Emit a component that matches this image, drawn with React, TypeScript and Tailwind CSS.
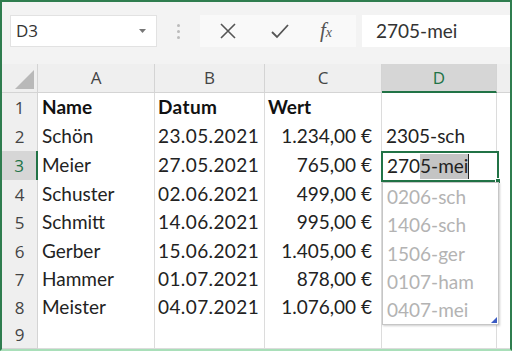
import React from 'react';

type Row = {
    n: number;
    h: string;
    a: string;
    b: string;
    c: string;
    d: string;
};

const rows: Row[] = [
    { n: 1, h: 'h-[29px]', a: 'Name', b: 'Datum', c: 'Wert', d: '' },
    { n: 2, h: 'h-[29px]', a: 'Schön', b: '23.05.2021', c: '1.234,00 €', d: '2305-sch' },
    { n: 3, h: 'h-[29px]', a: 'Meier', b: '27.05.2021', c: '765,00 €', d: '' },
    { n: 4, h: 'h-[28px]', a: 'Schuster', b: '02.06.2021', c: '499,00 €', d: '0206-sch' },
    { n: 5, h: 'h-[29px]', a: 'Schmitt', b: '14.06.2021', c: '995,00 €', d: '1406-sch' },
    { n: 6, h: 'h-[28px]', a: 'Gerber', b: '15.06.2021', c: '1.405,00 €', d: '1506-ger' },
    { n: 7, h: 'h-[28px]', a: 'Hammer', b: '01.07.2021', c: '878,00 €', d: '0107-ham' },
    { n: 8, h: 'h-[28px]', a: 'Meister', b: '04.07.2021', c: '1.076,00 €', d: '0407-mei' },
    { n: 9, h: 'h-[28px]', a: '', b: '', c: '', d: '' },
];

const cellFont = "font-['Lato','Liberation_Sans',sans-serif]";

function Toolbar() {
    return (
        <div className="flex h-[62px] items-start bg-[#f3f3f3] pt-[13px] pl-[8px]">
            <div className="flex h-[32px] w-[147px] items-center justify-between border border-[#e2e2e2] bg-white pl-[5px] pr-[10px]">
                <span className="font-['Open_Sans',sans-serif] text-[17px] text-[#333]">D3</span>
                <svg width="7" height="4" viewBox="0 0 7 4">
                    <path d="M0 0 L7 0 L3.5 4 Z" fill="#777" />
                </svg>
            </div>
            <div className="flex h-[32px] w-[43px] flex-col items-center justify-center gap-[3px]">
                <span className="h-[3px] w-[3px] rounded-full bg-[#bbb]" />
                <span className="h-[3px] w-[3px] rounded-full bg-[#bbb]" />
                <span className="h-[3px] w-[3px] rounded-full bg-[#bbb]" />
            </div>
            <div className="flex h-[32px] w-[156px] items-center bg-[#f9f9f9] pl-[19px]">
                <svg width="18" height="18" viewBox="0 0 18 18">
                    <path d="M2 2 L16 16 M16 2 L2 16" stroke="#555" strokeWidth="1.6" />
                </svg>
                <svg className="ml-[33px]" width="20" height="16" viewBox="0 0 20 16">
                    <path d="M2 9 L7 14 L18 2" stroke="#555" strokeWidth="1.8" fill="none" />
                </svg>
                <span className="ml-[30px] font-['Liberation_Serif',serif] text-[21px] italic text-[#555]">
                    f<span className="text-[14px]">x</span>
                </span>
            </div>
            <div className="ml-[6px] flex h-[32px] flex-1 items-center bg-white pl-[14px]">
                <span className={`${cellFont} text-[19px] text-[#333]`}>2705-mei</span>
            </div>
        </div>
    );
}

function HeaderRow() {
    return (
        <div className="grid h-[29px] grid-cols-[36px_117px_110px_117px_115px_1fr] bg-[#efefef] font-['Open_Sans',sans-serif] text-[17px] text-[#444]">
            <div className="relative border-r border-b border-[#d4d4d4]">
                <svg className="absolute right-[3px] bottom-[3px]" width="19" height="19" viewBox="0 0 19 19">
                    <path d="M19 0 L19 19 L0 19 Z" fill="#b9b9b9" />
                </svg>
            </div>
            <div className="flex items-center justify-center border-r border-b border-[#d4d4d4]">A</div>
            <div className="flex items-center justify-center border-r border-b border-[#d4d4d4]">B</div>
            <div className="flex items-center justify-center border-r border-b border-[#d4d4d4]">C</div>
            <div className="flex items-center justify-center border-r border-b-2 border-r-[#d4d4d4] border-b-[#217346] bg-[#d6d6d6] text-[#217346]">
                D
            </div>
            <div className="border-b border-[#d4d4d4]" />
        </div>
    );
}

function DataRow({ row }: { row: Row }) {
    const bold = row.n === 1 ? 'font-bold text-[#111]' : 'text-[#222]';
    const sel = row.n === 3;
    return (
        <div className={`grid ${row.h} grid-cols-[36px_117px_110px_117px_115px_1fr] ${cellFont} text-[19px]`}>
            <div
                className={`flex items-center justify-center border-b border-[#d4d4d4] font-['Open_Sans',sans-serif] text-[17px] ${
                    sel ? 'border-r-2 border-r-[#217346] bg-[#d6d6d6] text-[#217346]' : 'border-r border-r-[#d4d4d4] bg-[#efefef] text-[#444]'
                }`}
            >
                {row.n}
            </div>
            <div className={`flex items-center border-r border-b border-[#dcdcdc] bg-white pl-[4px] ${bold}`}>{row.a}</div>
            <div className={`flex items-center border-r border-b border-[#dcdcdc] bg-white pl-[3px] tracking-[0.4px] ${bold}`}>{row.b}</div>
            <div
                className={`flex items-center border-r border-b border-[#dcdcdc] bg-white ${
                    row.n === 1 ? 'pl-[3px]' : 'justify-end pr-[9px]'
                } ${bold}`}
            >
                {row.c}
            </div>
            <div className="flex items-center border-r border-b border-[#dcdcdc] bg-white pl-[4px] text-[#222]">{row.n === 2 ? row.d : ''}</div>
            <div className="border-b border-[#dcdcdc] bg-white" />
        </div>
    );
}

export default function App() {
    const suggestions = rows.filter((r) => r.n >= 4 && r.n <= 8);
    return (
        <div className="h-[351px] w-[512px] overflow-hidden bg-white">
            <div className="h-full w-full border-x-2 border-t-2 border-b-2 border-x-[#2f7d4f] border-t-[#2f7d4f] border-b-[#a9dfb9]">
                <div className="relative">
                    <Toolbar />
                    <HeaderRow />
                    {rows.map((r) => (
                        <DataRow key={r.n} row={r} />
                    ))}

                    {/* active cell D3 with inline edit */}
                    <div className={`absolute top-[149px] left-[379px] flex h-[31px] w-[118px] items-center border-2 border-[#217346] bg-white pl-[4px] ${cellFont} text-[19px] text-[#222]`}>
                        <span>270</span>
                        <span className="flex h-[25px] items-center bg-[#c4c4c4]">5-mei</span>
                        <span className="h-[25px] w-px bg-[#222]" />
                        <span className="absolute -right-[4px] -bottom-[4px] h-[6px] w-[6px] border border-white bg-[#217346]" />
                    </div>

                    {/* autocomplete list */}
                    <div className={`absolute top-[180px] left-[380px] w-[117px] border border-[#c6c6c6] bg-white shadow-[1px_1px_2px_rgba(0,0,0,0.2)] ${cellFont} text-[19px] text-[#b3b3b3]`}>
                        {suggestions.map((r) => (
                            <div key={r.n} className={`flex ${r.h} items-center pl-[4px]`}>
                                {r.d}
                            </div>
                        ))}
                        <svg className="absolute right-[1px] bottom-[1px]" width="6" height="6" viewBox="0 0 6 6">
                            <path d="M6 0 L6 6 L0 6 Z" fill="#3b5bc4" />
                        </svg>
                    </div>
                </div>
            </div>
        </div>
    );
}
